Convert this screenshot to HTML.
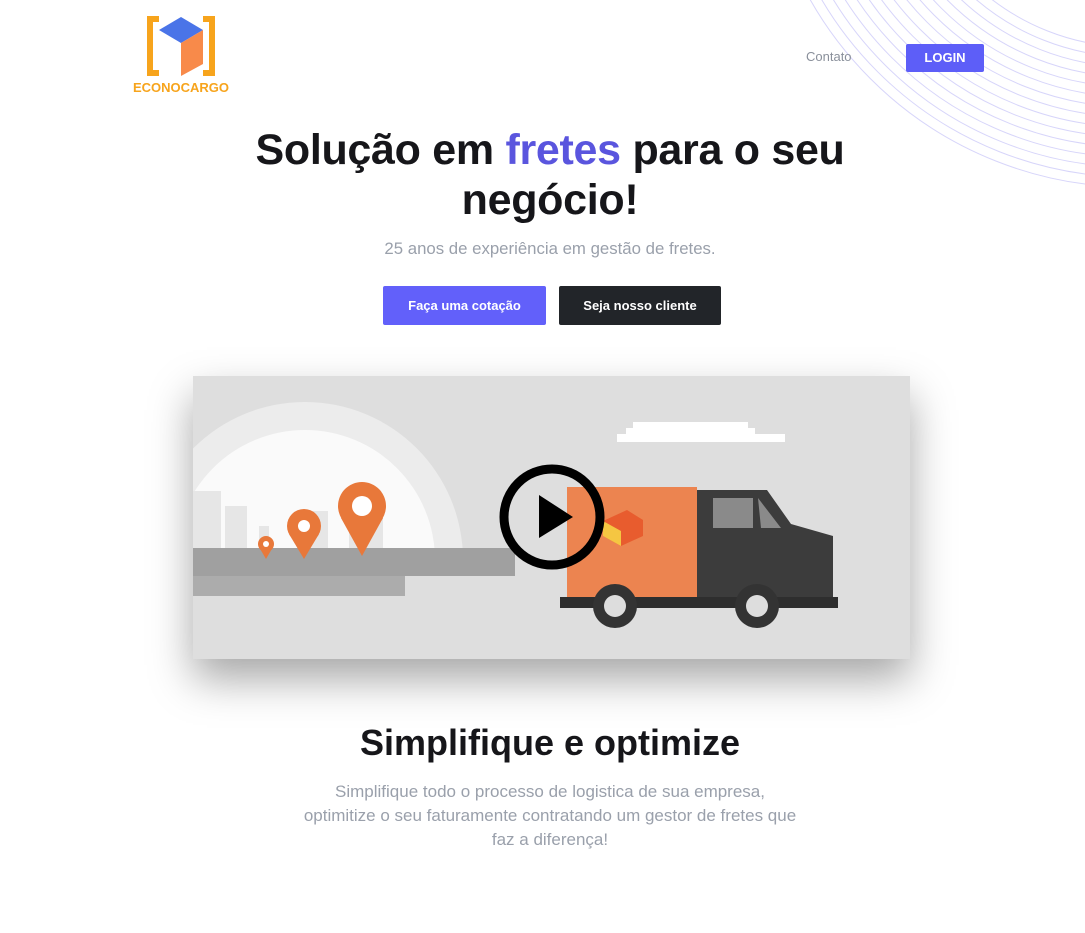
<!DOCTYPE html>
<html><head><meta charset="utf-8"><style>
body{margin:0;width:1085px;height:933px;background:#fff;font-family:"Liberation Sans",sans-serif;position:relative;overflow:hidden}
.abs{position:absolute}
h1{position:absolute;left:0;width:1100px;top:125px;margin:0;text-align:center;font-size:43px;line-height:50px;font-weight:bold;color:#16161a;letter-spacing:-0.3px}
.btn{position:absolute;height:39px;line-height:39px;color:#fff;font-weight:bold;font-size:13px;text-align:center;border-radius:2px}
.p{position:absolute;left:0;width:1100px;text-align:center;color:#9aa0ab;font-size:16px}
</style></head><body>
<svg class="abs" style="left:0;top:0" width="1085" height="260">
<g fill="none" stroke="#7a74ee" stroke-opacity="0.3" stroke-width="1">
<circle cx="1132" cy="-183" r="230"/><circle cx="1132" cy="-183" r="240"/><circle cx="1132" cy="-183" r="250"/><circle cx="1132" cy="-183" r="260"/><circle cx="1132" cy="-183" r="270"/><circle cx="1132" cy="-183" r="280"/><circle cx="1132" cy="-183" r="290"/><circle cx="1132" cy="-183" r="300"/><circle cx="1132" cy="-183" r="310"/><circle cx="1132" cy="-183" r="320"/><circle cx="1132" cy="-183" r="330"/><circle cx="1132" cy="-183" r="340"/><circle cx="1132" cy="-183" r="350"/><circle cx="1132" cy="-183" r="360"/><circle cx="1132" cy="-183" r="370"/>
</g></svg>
<svg class="abs" style="left:133px;top:14px" width="100" height="82">
<path d="M14 2H26V8H20V56H26V62H14Z M82 2H70V8H76V56H70V62H82Z" fill="#f7a41c"/>
<polygon points="26,16 48,3 70,16 48,29" fill="#4a74e8"/>
<polygon points="48,29 70,16 70,50 48,62" fill="#f88a4a"/>
<text x="48" y="78" text-anchor="middle" font-family="Liberation Sans" font-weight="bold" font-size="13" fill="#f7a41c">ECONOCARGO</text>
</svg>
<div class="abs" style="left:806px;top:49px;font-size:13px;color:#8a909b">Contato</div>
<div class="btn" style="left:906px;top:44px;width:78px;height:28px;line-height:28px;background:#5d5ef8;font-size:13px">LOGIN</div>
<h1>Solução em <span style="color:#5a55de">fretes</span> para o seu<br>negócio!</h1>
<div class="p" style="top:239px;font-size:16.8px">25 anos de experiência em gestão de fretes.</div>
<div class="btn" style="left:383px;top:286px;width:163px;background:#6260fa">Faça uma cotação</div>
<div class="btn" style="left:559px;top:286px;width:162px;background:#222529">Seja nosso cliente</div>
<div class="abs" style="left:193px;top:376px;width:717px;height:283px;box-shadow:0 20px 40px rgba(0,0,0,0.35)">
<svg width="717" height="283">
<rect width="717" height="283" fill="#dedede"/>
<clipPath id="c"><rect x="0" y="0" width="717" height="176"/></clipPath>
<g clip-path="url(#c)"><circle cx="112" cy="184" r="158" fill="#ececec"/><circle cx="112" cy="184" r="130" fill="#fafafa"/>
<g fill="#e6e6e6"><rect x="0" y="115" width="28" height="61"/><rect x="32" y="130" width="22" height="46"/><rect x="66" y="150" width="10" height="26"/><rect x="115" y="135" width="20" height="41"/><rect x="156" y="125" width="34" height="51"/></g></g>
<path d="M0 172H322V200H212V210H0Z" fill="#a0a0a0"/>
<path d="M0 200H212V220H0Z" fill="#acacac"/>
<g fill="#e8783a"><circle cx="169" cy="130" r="24"/><path d="M148 142L169 180L190 142Z"/><circle cx="111" cy="150" r="17"/><path d="M96 158L111 183L126 158Z"/><circle cx="73" cy="168" r="8"/><path d="M66 171L73 183L80 171Z"/></g>
<circle cx="169" cy="130" r="10" fill="#fff"/><circle cx="111" cy="150" r="6" fill="#fff"/><circle cx="73" cy="168" r="3" fill="#fff"/>
<path d="M433 52H440V46H555V52H562V58H592V66H424V58H433Z" fill="#fff"/>
<rect x="374" y="111" width="130" height="115" fill="#ec8450"/>
<polygon points="410,145 434,134 450,144 450,160 428,170 410,160" fill="#e85c2e"/><polygon points="410,145 428,155 428,170 410,160" fill="#f5c642"/>
<path d="M504 114H574L598 148L640 160V226H504Z" fill="#3c3c3c"/>
<path d="M520 122H560V152H520Z M565 122L588 152H568Z" fill="#8a8a8a"/>
<rect x="367" y="221" width="278" height="11" fill="#2e2e2e"/>
<circle cx="422" cy="230" r="22" fill="#333"/><circle cx="422" cy="230" r="11" fill="#ddd"/>
<circle cx="564" cy="230" r="22" fill="#333"/><circle cx="564" cy="230" r="11" fill="#ddd"/>
<circle cx="359" cy="141" r="48" fill="none" stroke="#000" stroke-width="9"/>
<polygon points="346,119 346,162 380,141" fill="#000"/>
</svg></div>
<div class="abs" style="left:0;width:1100px;top:722px;text-align:center;font-size:36px;font-weight:bold;color:#16161a">Simplifique e optimize</div>
<div class="p" style="top:780px;line-height:24px;font-size:17px">Simplifique todo o processo de logistica de sua empresa,<br>optimitize o seu faturamente contratando um gestor de fretes que<br>faz a diferença!</div>
</body></html>
